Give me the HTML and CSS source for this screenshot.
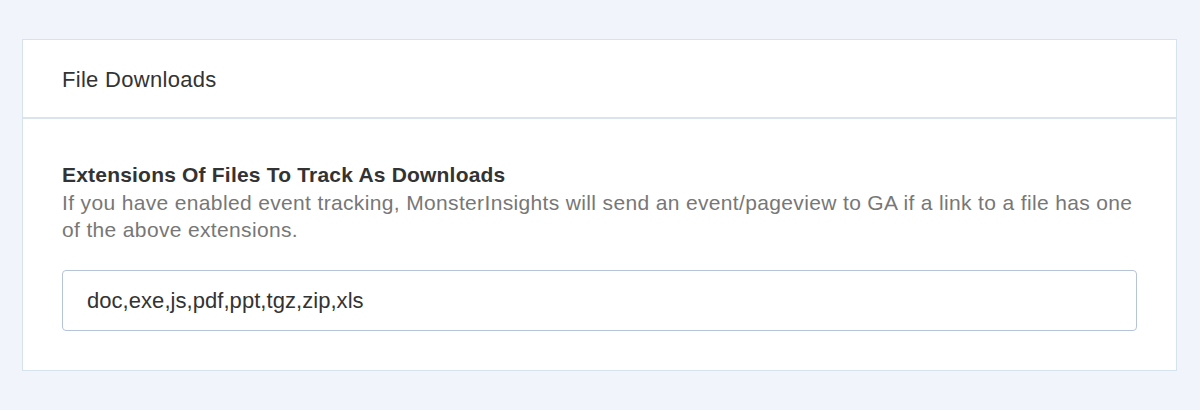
FILE: index.html
```html
<!DOCTYPE html>
<html>
  <head>
    <meta charset="utf-8" />
    <title>File Downloads</title>
    <link rel="stylesheet" href="styles.css">
  </head>
  <body>
    <div class="page">
      <div class="panel">
        <div class="panel-head">
          <span class="panel-title">File Downloads</span>
        </div>
        <div class="panel-body">
          <div class="field-label">Extensions Of Files To Track As Downloads</div>
          <div class="field-desc">
            If you have enabled event tracking, MonsterInsights will send an event/pageview to GA if a link to a file has one of the above extensions.
          </div>
          <input type="text" class="field-input" value="doc,exe,js,pdf,ppt,tgz,zip,xls" />
        </div>
      </div>
    </div>
  </body>
</html>
```

FILE: styles.css
```css
* {
  margin: 0;
  padding: 0;
  box-sizing: border-box;
}
html,
body {
  width: 100%;
  height: 100%;
}
body {
  background: #f1f4fb;
  font-family: "Liberation Sans", Arial, sans-serif;
  color: #333;
}
.page {
  padding: 39px 23px 0 22px;
}
.panel {
  background: #fff;
  border: 1px solid #d6e2ed;
}
.panel-head {
  height: 79px;
  padding: 3px 39px 0 39px;
  display: flex;
  align-items: center;
  border-bottom: 2px solid #dbe3ee;
}
.panel-title {
  font-size: 22px;
  color: #333;
  letter-spacing: 0.3px;
}
.panel-body {
  padding: 41px 39px 39px 39px;
}
.field-label {
  font-size: 21px;
  font-weight: bold;
  color: #333;
  line-height: 29px;
  letter-spacing: 0.2px;
}
.field-desc {
  font-size: 21px;
  line-height: 27px;
  color: #777;
  letter-spacing: 0.35px;
}
.field-input {
  display: block;
  width: 100%;
  height: 61px;
  margin-top: 27px;
  padding: 0 24px;
  border: 1px solid #b6c4d7;
  border-radius: 4px;
  font-family: "Liberation Sans", Arial, sans-serif;
  font-size: 22px;
  letter-spacing: 0.05px;
  color: #333;
  background: #fff;
  outline: none;
}
```
